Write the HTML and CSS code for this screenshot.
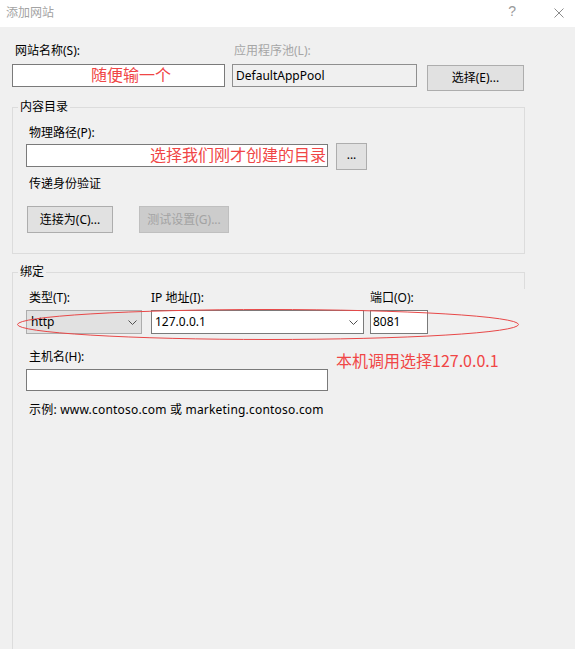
FILE: index.html
```html
<!DOCTYPE html>
<html lang="zh-CN">
<head>
<meta charset="utf-8">
<title>添加网站</title>
<link rel="stylesheet" href="styles.css">
</head>
<body>
<div class="window">
  <div class="titlebar">
    <span class="title">添加网站</span>
    <div class="title-btns">
      <span class="help">?</span>
      <svg class="close" width="10" height="10" viewBox="0 0 10 10"><path d="M0.5 0.5L9.5 9.5M9.5 0.5L0.5 9.5" stroke="#8c8c8c" stroke-width="1" fill="none"/></svg>
    </div>
  </div>
  <div class="content">
    <div class="site-row">
      <div class="field f-name">
        <div class="label ind3">网站名称(S):</div>
        <div class="input input-name"><span class="note">随便输一个</span></div>
      </div>
      <div class="field f-pool">
        <div class="label ind2 disabled">应用程序池(L):</div>
        <div class="input input-disabled">DefaultAppPool</div>
      </div>
      <button class="btn btn-select">选择(E)...</button>
    </div>

    <fieldset class="group group-content">
      <legend>内容目录</legend>
      <div class="group-body">
        <div class="label ind3 lbl-path">物理路径(P):</div>
        <div class="path-row">
          <div class="input input-path"><span class="note">选择我们刚才创建的目录</span></div>
          <button class="btn btn-browse">...</button>
        </div>
        <div class="label ind3 auth">传递身份验证</div>
        <div class="btn-row">
          <button class="btn btn-connect">连接为(C)...</button>
          <button class="btn btn-disabled">测试设置(G)...</button>
        </div>
      </div>
    </fieldset>

    <fieldset class="group group-binding">
      <legend>绑定</legend>
      <div class="group-body binding-body">
        <div class="bind-row">
          <div class="col col-type">
            <div class="label ind3 lbl-bind">类型(T):</div>
            <div class="select select-type"><span>http</span><svg width="9" height="5" viewBox="0 0 9 5"><path d="M0.5 0.5L4.5 4.5L8.5 0.5" stroke="#505050" fill="none"/></svg></div>
          </div>
          <div class="col col-ip">
            <div class="label lbl-bind">IP 地址(I):</div>
            <div class="select select-ip"><span>127.0.0.1</span><svg width="9" height="5" viewBox="0 0 9 5"><path d="M0.5 0.5L4.5 4.5L8.5 0.5" stroke="#505050" fill="none"/></svg></div>
          </div>
          <div class="col col-port">
            <div class="label lbl-bind">端口(O):</div>
            <div class="input input-port">8081</div>
          </div>
        </div>
        <div class="label ind3 lbl-host">主机名(H):</div>
        <div class="input input-host"></div>
        <div class="label ind3 example">示例: www.contoso.com 或 marketing.contoso.com</div>
      </div>
    </fieldset>

    <svg class="ellipse" width="504" height="34" viewBox="0 0 504 34"><ellipse cx="252" cy="16.5" rx="250.5" ry="15" fill="none" stroke="#e84848" stroke-width="1"/></svg>
    <span class="note note-host">本机调用选择127.0.0.1</span>
  </div>
</div>
</body>
</html>
```

FILE: styles.css
```css
* { box-sizing: border-box; }

html, body {
  margin: 0;
  padding: 0;
  background: #ffffff;
}

body {
  font-family: "Noto Sans", "Noto Sans CJK SC", sans-serif;
  font-size: 12px;
  line-height: 16px;
  color: #000000;
}

.window {
  width: 575px;
  height: 649px;
  display: flex;
  flex-direction: column;
}

.titlebar {
  height: 27px;
  flex: none;
  display: flex;
  align-items: flex-start;
  justify-content: space-between;
  background: #ffffff;
}

.title {
  font-family: "Noto Sans CJK SC", sans-serif;
  font-size: 12px;
  line-height: 16px;
  color: #a3a3a3;
  margin: 4px 0 0 6px;
}

.title-btns {
  display: flex;
  align-items: flex-start;
}

.help {
  font-family: "Liberation Sans", sans-serif;
  font-size: 14px;
  line-height: 16px;
  color: #9a9a9a;
  margin: 3px 0 0 0;
}

.close {
  display: block;
  margin: 8px 11px 0 38px;
}

.content {
  position: relative;
  flex: 1;
  background: #f0f0f0;
  display: flex;
  flex-direction: column;
  align-items: flex-start;
}

.label {
  height: 16px;
  white-space: nowrap;
}
.ind3 { padding-left: 3px; }
.ind2 { padding-left: 2px; }
.disabled { color: #a6a6a6; }

.input {
  height: 23px;
  background: #ffffff;
  border: 1px solid #7a7a7a;
  display: flex;
  align-items: center;
  white-space: nowrap;
}

.note {
  font-family: "Noto Sans CJK SC", sans-serif;
  font-size: 16px;
  line-height: 20px;
  color: #f04646;
  white-space: nowrap;
}

.btn {
  font: inherit;
  color: #000000;
  margin: 0;
  padding: 0;
  background: #e1e1e1;
  border: 1px solid #adadad;
  display: flex;
  align-items: center;
  justify-content: center;
  white-space: nowrap;
}

/* top row */
.site-row {
  display: flex;
  align-items: flex-start;
  padding: 16px 0 0 12px;
}
.field .label { margin-bottom: 5px; }
.f-name { width: 213px; }
.f-pool { width: 185px; margin-left: 7px; }
.input-name { padding-left: 78px; }
.input-name .note { margin-top: -4px; }
.input-disabled {
  background: #f0f0f0;
  border-color: #8f8f8f;
  padding-left: 3px;
}
.btn-select {
  width: 97px;
  height: 26px;
  margin: 22px 0 0 10px;
}

/* group boxes */
.group {
  margin: 0 0 0 12px;
  padding: 0;
  min-width: 0;
  width: 513px;
  border: 1px solid #dcdcdc;
}
.group legend {
  margin-left: 5px;
  padding: 0 2px;
  height: 16px;
  line-height: 16px;
}
.group-body {
  position: relative;
  padding: 10px 0 20px 13px;
}

.group-content { margin-top: 8px; }
.lbl-path { margin-bottom: 3px; }
.path-row {
  display: flex;
  align-items: flex-start;
}
.input-path {
  width: 302px;
  justify-content: flex-end;
  padding-right: 1px;
}
.input-path .note { margin-top: -4px; }
.btn-browse {
  width: 31px;
  height: 27px;
  margin: -1px 0 0 8px;
  padding-bottom: 4px;
}
.auth { margin-top: 6px; }
.btn-row {
  display: flex;
  margin-top: 14px;
  padding-left: 1px;
}
.btn-connect { width: 86px; height: 27px; }
.btn-disabled {
  width: 90px;
  height: 27px;
  margin-left: 26px;
  background: #cccccc;
  border-color: #bfbfbf;
  color: #a3a3a3;
}

/* binding */
.group-binding {
  margin-top: 10px;
  flex: 1;
  border-bottom: none;
  border-right-color: transparent;
}
.binding-body::before {
  content: "";
  position: absolute;
  right: -1px;
  top: -8px;
  width: 1px;
  height: 17px;
  background: #dcdcdc;
}
.bind-row {
  display: flex;
  align-items: flex-start;
}
.lbl-bind { margin-bottom: 4px; }
.col-type { width: 116px; }
.col-ip { width: 213px; margin-left: 9px; }
.col-port { width: 58px; margin-left: 6px; }

.select {
  height: 24px;
  display: flex;
  align-items: center;
  justify-content: space-between;
  white-space: nowrap;
}
.select svg { display: block; }
.select-type {
  background: #e1e1e1;
  border: 1px solid #adadad;
  padding: 0 4px 0 4px;
}
.select-ip {
  background: #ffffff;
  border: 1px solid #7a7a7a;
  padding: 0 5px 0 3px;
}
.input-port {
  height: 24px;
  padding-left: 2px;
}
.lbl-host { margin-top: 15px; margin-bottom: 4px; }
.input-host { width: 302px; height: 22px; }
.example { margin-top: 11px; letter-spacing: 0.2px; }

/* annotations */
.ellipse {
  position: absolute;
  left: 16px;
  top: 281px;
}
.note-host {
  position: absolute;
  left: 336px;
  top: 323px;
}
```
